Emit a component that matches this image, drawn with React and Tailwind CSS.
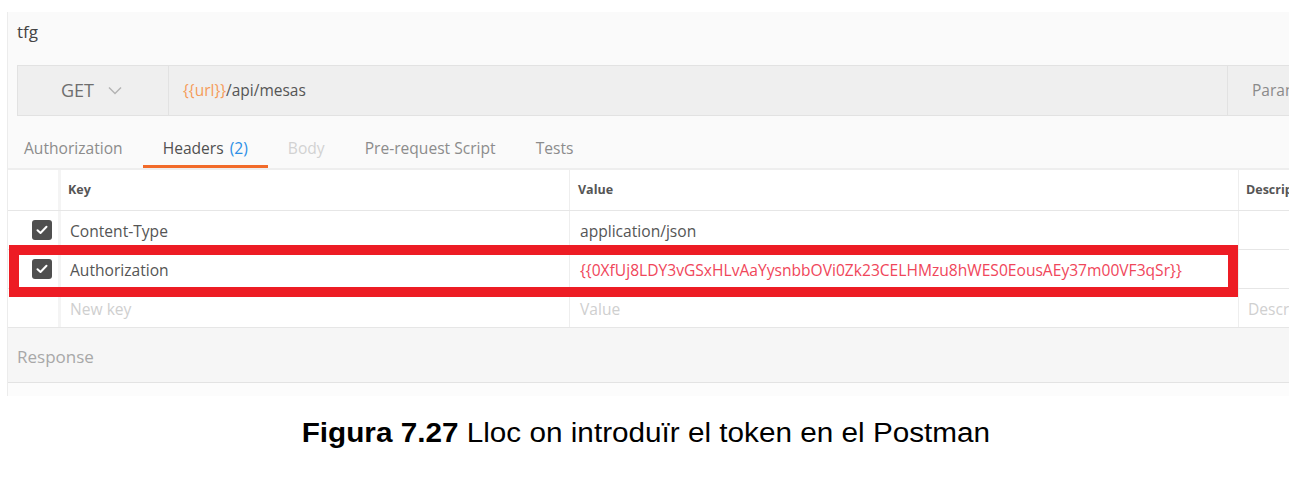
import React from 'react';

const ui = { fontFamily: '"Open Sans", "Noto Sans", sans-serif' };

const CheckBox = () => (
  <div className="h-[20px] w-[20px] rounded-[3px] bg-[#4f4f4f] flex items-center justify-center">
    <svg width="12" height="10" viewBox="0 0 12 10" fill="none">
      <path d="M1.5 5.2 L4.5 8 L10.5 1.8" stroke="#fff" strokeWidth="2" strokeLinecap="round" strokeLinejoin="round" />
    </svg>
  </div>
);

const Row = ({ checked, k, v, d, placeholder, valueClass = 'text-[#555]' }) => (
  <div className="flex h-[39px] border-b border-[#e6e6e6] text-[15.6px]">
    <div className="w-[50px] shrink-0 flex items-center pl-[24px]">{checked && <CheckBox />}</div>
    <div className={`w-[511px] shrink-0 border-l-[3px] border-[#f4f4f4] flex items-center pl-[9px] pt-[3px] ${placeholder ? 'text-[#cfcfcf]' : 'text-[#555]'}`}>
      {k}
    </div>
    <div className={`w-[669px] shrink-0 border-l border-[#eeeeee] flex items-center pl-[10px] pt-[3px] whitespace-nowrap ${placeholder ? 'text-[#cfcfcf]' : valueClass}`}>
      {v}
    </div>
    <div className="w-[200px] shrink-0 border-l border-[#eeeeee] flex items-center pl-[9px] pt-[3px] text-[#d0d0d0] whitespace-nowrap">
      {d}
    </div>
  </div>
);

const tabs = [
  { label: 'Authorization', cls: 'text-[#8c8c8c]' },
  { label: 'Headers', cls: 'text-[#505050]', count: '(2)', active: true },
  { label: 'Body', cls: 'text-[#d2d2d2]' },
  { label: 'Pre-request Script', cls: 'text-[#8c8c8c]' },
  { label: 'Tests', cls: 'text-[#8c8c8c]' },
];

export default function App() {
  return (
    <div className="w-[1316px] h-[486px] bg-white overflow-hidden">
      <div className="pt-[12px] pl-[7px]">
        <div className="w-[1282px] overflow-hidden bg-[#fafafa] border-l border-[#ececec]" style={ui}>
          {/* title */}
          <div className="h-[53px] flex items-center pl-[9px] text-[17px] text-[#444] pb-[14px]">tfg</div>

          {/* url bar */}
          <div className="pl-[9px] h-[51px]">
            <div className="flex h-[51px] w-[1400px] border border-[#e2e2e2] bg-[#efefef]">
              <div className="w-[151px] shrink-0 flex items-center pl-[43px] gap-[14px] border-r border-[#e2e2e2] text-[18px] text-[#6e6e6e]">
                <span>GET</span>
                <svg width="14" height="9" viewBox="0 0 14 9" fill="none">
                  <path d="M1 1.5 L7 7.5 L13 1.5" stroke="#b3b3b3" strokeWidth="1.5" />
                </svg>
              </div>
              <div className="w-[1058px] shrink-0 flex items-center pl-[14px] text-[15.5px] text-[#555]">
                <span className="text-[#f59c5a]">{'{{url}}'}</span>/api/mesas
              </div>
              <div className="flex-1 border-l border-[#e2e2e2] flex items-center pl-[24px] text-[15.5px] text-[#8a8a8a]">Params</div>
            </div>
          </div>

          {/* tabs */}
          <div className="h-[54px] flex items-end border-b-2 border-[#eeeeee] -ml-[4px]">
            {tabs.map((t) => (
              <div key={t.label} className="relative px-[20px] h-full flex items-center pt-[13px] text-[15.6px] whitespace-nowrap">
                <span className={t.cls}>{t.label}</span>
                {t.count && <span className="ml-[6px] text-[#2c8fe6]">{t.count}</span>}
                {t.active && <div className="absolute left-0 right-0 bottom-0 h-[3px] bg-[#f26b2a]" />}
              </div>
            ))}
          </div>

          {/* headers table */}
          <div className="relative bg-white">
            <div className="flex h-[41px] border-b border-[#e6e6e6] text-[12.5px] font-bold text-[#555]">
              <div className="w-[50px] shrink-0" />
              <div className="w-[511px] shrink-0 border-l-[3px] border-[#f4f4f4] flex items-center pl-[7px]">Key</div>
              <div className="w-[669px] shrink-0 border-l border-[#eeeeee] flex items-center pl-[8px]">Value</div>
              <div className="w-[200px] shrink-0 border-l border-[#eeeeee] flex items-center pl-[7px] whitespace-nowrap">Description</div>
            </div>
            <Row checked k="Content-Type" v="application/json" />
            <Row
              checked
              k="Authorization"
              v="{{0XfUj8LDY3vGSxHLvAaYysnbbOVi0Zk23CELHMzu8hWES0EousAEy37m00VF3qSr}}"
              valueClass="text-[#f0465a]"
            />
            <Row placeholder k="New key" v="Value" d="Description" />
            <div className="absolute left-[1px] top-[75px] w-[1229px] h-[52px] border-[10px] border-[#ed1c24]" />
          </div>

          {/* response */}
          <div className="h-[55px] bg-[#f6f6f6] border-b border-[#e3e3e3] flex items-center pl-[9px] pt-[3px] text-[17px] text-[#a8a8a8]">
            Response
          </div>
          <div className="h-[13px] bg-[#fcfcfc]" />
        </div>
      </div>

      {/* caption */}
      <div
        className="mt-[17px] pr-[22px] flex justify-center text-[27px] text-black scale-x-110"
        style={{ fontFamily: '"Liberation Sans", Arial, sans-serif' }}
      >
        <span className="font-bold">Figura 7.27</span>
        <span>&nbsp;Lloc on introduïr el token en el Postman</span>
      </div>
    </div>
  );
}
